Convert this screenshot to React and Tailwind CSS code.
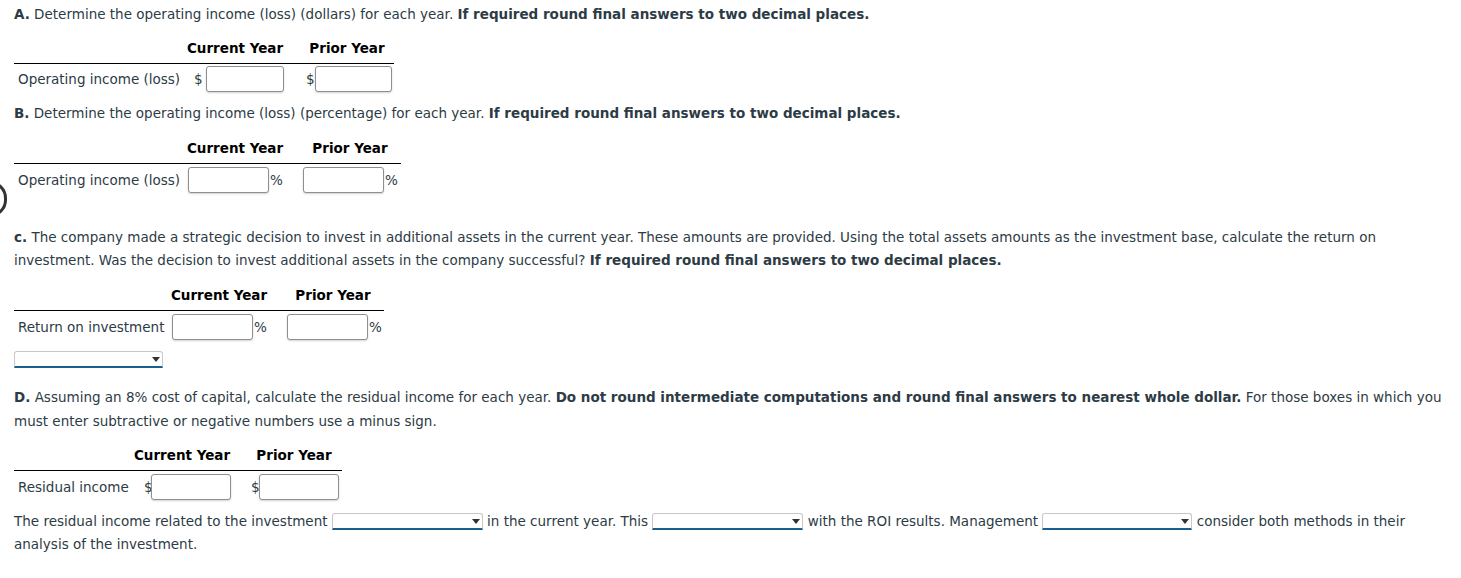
import React from "react";

const Box = ({ w }) => (
  <div className={`h-[26px] ${w} shrink-0 rounded-[3px] border border-[#8f8f8f] bg-white shadow-[0_1px_2px_rgba(0,0,0,0.18)]`} />
);

const Sel = ({ w }) => (
  <span className={`relative inline-block align-middle ${w} h-[17px] -mt-[2px] rounded-t-[3px] border border-[#c8c8c8] border-b-2 border-b-[#1b5f8e] bg-white`}>
    <span className="absolute right-[2px] top-[5px] w-0 h-0 border-l-[4px] border-r-[4px] border-t-[5px] border-l-transparent border-r-transparent border-t-[#333]" />
  </span>
);

export default function App() {
  return (
    <div
      className="relative min-h-[578px] w-[1461px] bg-white pl-[14px] pt-[3px] text-[13.5px] text-[#2d3b45] overflow-hidden"
      style={{ fontFamily: '"DejaVu Sans", Verdana, sans-serif' }}
    >
      <div className="absolute left-[-27px] top-[181px] h-[36px] w-[34px] rounded-full border-[3px] border-[#333]" />

      {/* A */}
      <p className="leading-[23px]">
        <b>A.</b> Determine the operating income (loss) (dollars) for each year. <b>If required round final answers to two decimal places.</b>
      </p>
      <div className="mt-[12px] w-[380px]">
        <div className="flex h-[26px] items-end border-b border-black pb-[5px] font-bold leading-[20px] text-black">
          <div className="w-[166px] shrink-0" />
          <div className="w-[110px] shrink-0 text-center">Current Year</div>
          <div className="w-[2px] shrink-0" />
          <div className="w-[110px] shrink-0 text-center">Prior Year</div>
        </div>
        <div className="flex h-[30px] items-center">
          <div className="w-[180px] shrink-0 pl-[4px] whitespace-nowrap">Operating income (loss)</div>
          <span className="w-[12px] shrink-0">$</span>
          <Box w="w-[78px]" />
          <span className="ml-[22px] w-[9px] shrink-0">$</span>
          <Box w="w-[77px]" />
        </div>
      </div>

      {/* B */}
      <p className="mt-[8px] leading-[23px]">
        <b>B.</b> Determine the operating income (loss) (percentage) for each year. <b>If required round final answers to two decimal places.</b>
      </p>
      <div className="mt-[13px] w-[387px]">
        <div className="flex h-[26px] items-end border-b border-black pb-[5px] font-bold leading-[20px] text-black">
          <div className="w-[166px] shrink-0" />
          <div className="w-[110px] shrink-0 text-center">Current Year</div>
          <div className="w-[5px] shrink-0" />
          <div className="w-[110px] shrink-0 text-center">Prior Year</div>
        </div>
        <div className="flex h-[32px] items-center">
          <div className="w-[174px] shrink-0 pl-[4px] whitespace-nowrap">Operating income (loss)</div>
          <Box w="w-[81px]" />
          <span className="ml-[1px] w-[33px] shrink-0">%</span>
          <Box w="w-[81px]" />
          <span className="ml-[1px]">%</span>
        </div>
      </div>

      {/* C */}
      <p className="mt-[30px] w-[1420px] leading-[23px]">
        <b>c.</b> The company made a strategic decision to invest in additional assets in the current year. These amounts are provided. Using the total assets amounts as the investment base, calculate the return on investment. Was the decision to invest additional assets in the company successful? <b>If required round final answers to two decimal places.</b>
      </p>
      <div className="mt-[13px] w-[370px]">
        <div className="flex h-[26px] items-end border-b border-black pb-[5px] font-bold leading-[20px] text-black">
          <div className="w-[150px] shrink-0" />
          <div className="w-[110px] shrink-0 text-center">Current Year</div>
          <div className="w-[4px] shrink-0" />
          <div className="w-[110px] shrink-0 text-center">Prior Year</div>
        </div>
        <div className="flex h-[32px] items-center">
          <div className="w-[158px] shrink-0 pl-[4px] whitespace-nowrap">Return on investment</div>
          <Box w="w-[81px]" />
          <span className="ml-[1px] w-[33px] shrink-0">%</span>
          <Box w="w-[81px]" />
          <span className="ml-[1px]">%</span>
        </div>
      </div>
      <div className="mt-[10px] h-[17px] leading-none">
        <Sel w="w-[149px]" />
      </div>

      {/* D */}
      <p className="mt-[15px] w-[1445px] leading-[24px]">
        <b>D.</b> Assuming an 8% cost of capital, calculate the residual income for each year. <b>Do not round intermediate computations and round final answers to nearest whole dollar.</b> For those boxes in which you must enter subtractive or negative numbers use a minus sign.
      </p>
      <div className="mt-[12px] w-[328px]">
        <div className="flex h-[26px] items-end border-b border-black pb-[5px] font-bold leading-[20px] text-black">
          <div className="w-[113px] shrink-0" />
          <div className="w-[110px] shrink-0 text-center">Current Year</div>
          <div className="w-[2px] shrink-0" />
          <div className="w-[110px] shrink-0 text-center">Prior Year</div>
        </div>
        <div className="flex h-[32px] items-center">
          <div className="w-[130px] shrink-0 pl-[4px] whitespace-nowrap">Residual income</div>
          <span className="w-[7px] shrink-0">$</span>
          <Box w="w-[80px]" />
          <span className="ml-[20px] w-[8px] shrink-0">$</span>
          <Box w="w-[80px]" />
        </div>
      </div>
      <p className="mt-[7px] w-[1440px] leading-[23px]">
        The residual income related to the investment <Sel w="w-[151px]" /> in the current year. This <Sel w="w-[151px]" /> with the ROI results. Management <Sel w="w-[150px]" /> consider both methods in their analysis of the investment.
      </p>
    </div>
  );
}
